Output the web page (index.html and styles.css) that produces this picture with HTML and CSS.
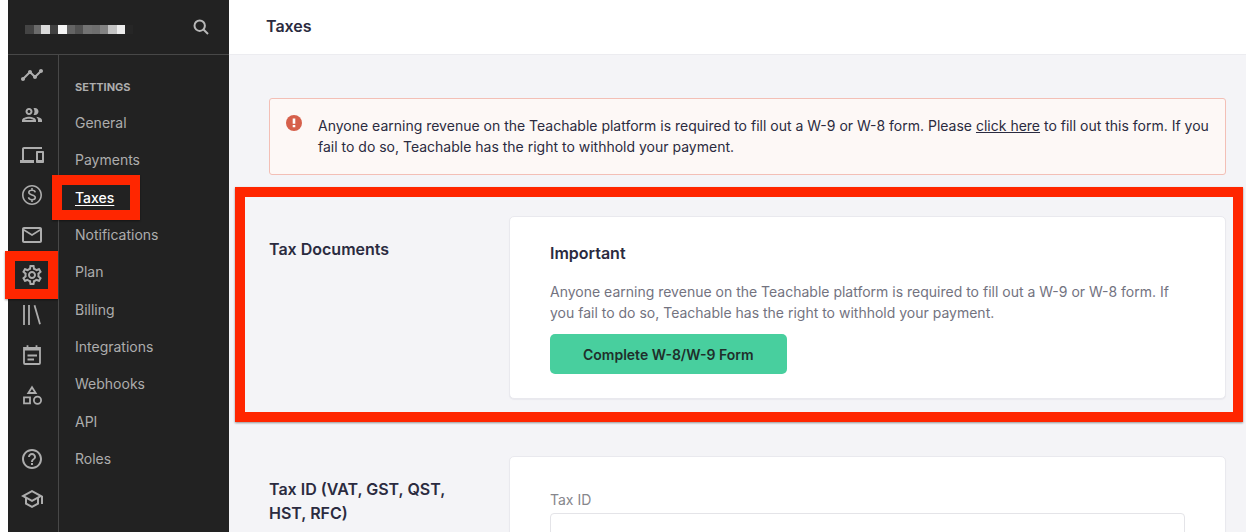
FILE: index.html
```html
<!DOCTYPE html>
<html lang="en">
<head>
<meta charset="utf-8">
<title>Taxes</title>
<link rel="stylesheet" href="styles.css">
</head>
<body>
<div class="app">
  <aside class="sidebar">
    <div class="school">
      <div class="school-name"><svg width="110" height="9" viewBox="0 0 110 9" aria-hidden="true" shape-rendering="crispEdges">
        <path fill="#444" d="M0 0h9v9H0z"/><path fill="#6b6b6b" d="M9 0h7v9H9z"/><path fill="#dadada" d="M16 0h9v9h-9z"/><path fill="#414141" d="M25 0h8v9h-8z"/><path fill="#f5f5f5" d="M33 0h9v9h-9z"/><path fill="#646464" d="M42 0h8v9h-8z"/><path fill="#525252" d="M50 0h8v9h-8z"/><path fill="#737373" d="M58 0h9v9h-9z"/><path fill="#6f6f6f" d="M67 0h8v9h-8z"/><path fill="#838383" d="M75 0h8v9h-8z"/><path fill="#c3c3c3" d="M83 0h9v9h-9z"/><path fill="#ececec" d="M92 0h8v9h-8z"/><path fill="#262626" d="M100 0h8v9h-8z"/></svg></div>
      <button class="search" aria-label="Search"><svg width="16" height="16" viewBox="0 0 16 16" fill="none" stroke="currentColor" stroke-width="2"><circle cx="6.700" cy="6.700" r="5.200"/><path d="M10.500 10.500l4.500 4.500"/></svg></button>
    </div>
    <div class="navs">
      <nav class="rail" aria-label="Main">
        <a href="#" aria-label="Dashboard"><svg viewBox="0 0 24 24"><path d="M23 8c0 1.100-.9 2-2 2-.18 0-.35-.02-.51-.07l-3.560 3.550c.05.16.07.34.07.52 0 1.100-.9 2-2 2s-2-.9-2-2c0-.18.02-.36.07-.52l-2.550-2.550c-.16.05-.34.07-.52.07s-.36-.02-.52-.07l-4.550 4.560c.05.16.07.33.07.51 0 1.100-.9 2-2 2s-2-.9-2-2 .9-2 2-2c.18 0 .35.02.51.07l4.560-4.550C8.020 9.360 8 9.180 8 9c0-1.100.9-2 2-2s2 .9 2 2c0 .18-.02.36-.07.52l2.550 2.550c.16-.05.34-.07.52-.07s.36.02.52.07l3.550-3.560C19.020 8.350 19 8.180 19 8c0-1.100.9-2 2-2s2 .9 2 2z"/></svg></a>
        <a href="#" aria-label="Users"><svg viewBox="0 0 24 24"><path d="M9 13.750c-2.340 0-7 1.170-7 3.500V19h14v-1.750c0-2.330-4.660-3.500-7-3.500zM4.340 17c.84-.58 2.870-1.250 4.660-1.250s3.820.67 4.660 1.250H4.340zM9 12c1.930 0 3.500-1.570 3.500-3.500S10.930 5 9 5 5.500 6.570 5.500 8.500 7.070 12 9 12zm0-5c.83 0 1.500.67 1.500 1.500S9.830 10 9 10s-1.500-.67-1.500-1.500S8.170 7 9 7zm7.040 6.810c1.160.84 1.960 1.960 1.960 3.440V19h4v-1.750c0-2.020-3.500-3.170-5.960-3.440zM15 12c1.930 0 3.500-1.570 3.500-3.500S16.930 5 15 5c-.54 0-1.040.13-1.500.35.63.89 1 1.980 1 3.150s-.37 2.260-1 3.150c.46.22.96.35 1.500.35z"/></svg></a>
        <a href="#" aria-label="Site"><svg viewBox="0 0 24 24"><path d="M4 6h18V4H4c-1.100 0-2 .9-2 2v11H0v3h14v-3H4V6zm19 2h-6c-.55 0-1 .45-1 1v10c0 .55.45 1 1 1h6c.55 0 1-.45 1-1V9c0-.55-.45-1-1-1zm-1 9h-4v-7h4v7z"/></svg></a>
        <a href="#" aria-label="Sales"><svg viewBox="0 0 24 24"><path d="M12 2C6.480 2 2 6.480 2 12s4.480 10 10 10 10-4.480 10-10S17.520 2 12 2zm0 18.400c-4.630 0-8.400-3.770-8.400-8.400S7.370 3.600 12 3.600s8.400 3.770 8.400 8.400-3.770 8.400-8.400 8.400z"/><path fill="none" stroke="currentColor" stroke-width="1.600" d="M15.200 9.300C15 8 13.800 7.300 12 7.300c-2 0-3.200.8-3.200 2.200 0 3.100 6.500 1.700 6.500 5 0 1.400-1.300 2.200-3.300 2.200s-3.300-.9-3.400-2.400M12 5v2.300M12 16.700V19"/></svg></a>
        <a href="#" aria-label="Emails"><svg viewBox="0 0 24 24"><path d="M22 6c0-1.100-.9-2-2-2H4c-1.100 0-2 .9-2 2v12c0 1.100.9 2 2 2h16c1.100 0 2-.9 2-2V6zm-2 0l-8 5-8-5h16zm0 12H4V8l8 5 8-5v10z"/></svg></a>
        <a class="marked" href="#" aria-label="Settings"><svg viewBox="0 0 24 24"><path d="M19.430 12.980c.04-.32.07-.64.07-.98 0-.34-.03-.66-.07-.98l2.110-1.650c.19-.15.24-.42.12-.64l-2-3.460c-.09-.16-.26-.25-.44-.25-.06 0-.12.01-.17.03l-2.490 1c-.52-.4-1.080-.73-1.690-.98l-.38-2.650C14.460 2.180 14.250 2 14 2h-4c-.25 0-.46.18-.49.42l-.38 2.650c-.61.25-1.170.59-1.690.98l-2.490-1c-.06-.02-.12-.03-.18-.03-.17 0-.34.09-.43.25l-2 3.460c-.13.22-.07.49.12.64l2.110 1.650c-.04.32-.07.65-.07.98 0 .33.03.66.07.98l-2.110 1.650c-.19.15-.24.42-.12.64l2 3.460c.09.16.26.25.44.25.06 0 .12-.01.17-.03l2.490-1c.52.4 1.080.73 1.690.98l.38 2.650c.03.24.24.42.49.42h4c.25 0 .46-.18.49-.42l.38-2.650c.61-.25 1.170-.59 1.690-.98l2.490 1c.06.02.12.03.18.03.17 0 .34-.09.43-.25l2-3.460c.12-.22.07-.49-.12-.64l-2.110-1.650zm-1.980-1.710c.04.31.05.52.05.73 0 .21-.02.43-.05.73l-.14 1.130.89.7 1.080.84-.7 1.210-1.270-.51-1.040-.42-.9.68c-.43.32-.84.56-1.250.73l-1.060.43-.16 1.130-.2 1.350h-1.400l-.19-1.350-.16-1.130-1.060-.43c-.43-.18-.83-.41-1.230-.71l-.91-.7-1.060.43-1.270.51-.7-1.210 1.080-.84.89-.7-.14-1.130c-.03-.31-.05-.54-.05-.74s.02-.43.05-.73l.14-1.130-.89-.7-1.080-.84.7-1.210 1.270.51 1.040.42.9-.68c.43-.32.84-.56 1.250-.73l1.060-.43.16-1.130.2-1.350h1.390l.19 1.350.16 1.130 1.060.43c.43.18.83.41 1.230.71l.91.7 1.060-.43 1.270-.51.7 1.210-1.070.85-.89.7.14 1.130zM12 8c-2.210 0-4 1.790-4 4s1.790 4 4 4 4-1.790 4-4-1.790-4-4-4zm0 6c-1.100 0-2-.9-2-2s.9-2 2-2 2 .9 2 2-.9 2-2 2z"/></svg></a>
        <a href="#" aria-label="Library"><svg viewBox="0 0 24 24" class="line"><path d="M4 2v20M9 2v20M14.500 2.200l5.500 19"/></svg></a>
        <a href="#" aria-label="Calendar"><svg viewBox="0 0 24 24" class="line"><path d="M4 5h16v15a1 1 0 0 1-1 1H5a1 1 0 0 1-1-1zM4 6.500h16M7.500 2.200v3M16.500 2.200v3M7.500 12.500h9.500M7.500 16.500h6.500"/></svg></a>
        <a href="#" aria-label="Apps"><svg viewBox="0 0 24 24" class="line"><path d="M12 4.200L8.300 10h7.400zM4 14.300h6v6H4z"/><circle cx="17.500" cy="17.300" r="3.600"/></svg></a>
        <a class="help" href="#" aria-label="Help"><svg viewBox="0 0 24 24"><path d="M11 18h2v-2h-2v2zm1-16C6.480 2 2 6.480 2 12s4.480 10 10 10 10-4.480 10-10S17.520 2 12 2zm0 18c-4.410 0-8-3.590-8-8s3.590-8 8-8 8 3.590 8 8-3.590 8-8 8zm0-14c-2.210 0-4 1.790-4 4h2c0-1.100.9-2 2-2s2 .9 2 2c0 2-3 1.750-3 5h2c0-2.250 3-2.500 3-5 0-2.210-1.790-4-4-4z"/></svg></a>
        <a href="#" aria-label="Academy"><svg viewBox="0 0 24 24"><path d="M12 3L1 9l4 2.180v6L12 21l7-3.820v-6l2-1.090V17h2V9L12 3zm6.820 6L12 12.720 5.180 9 12 5.280 18.820 9zM17 15.990l-5 2.730-5-2.730v-3.720L12 15l5-2.730v3.720z"/></svg></a>
      </nav>
      <nav class="menu" aria-labelledby="menu-title">
        <h2 id="menu-title">SETTINGS</h2>
        <ul>
          <li><a href="#">General</a></li>
          <li><a href="#">Payments</a></li>
          <li class="marked"><a class="current" href="#" aria-current="page">Taxes</a></li>
          <li><a href="#">Notifications</a></li>
          <li><a href="#">Plan</a></li>
          <li><a href="#">Billing</a></li>
          <li><a href="#">Integrations</a></li>
          <li><a href="#">Webhooks</a></li>
          <li><a href="#">API</a></li>
          <li><a href="#">Roles</a></li>
        </ul>
      </nav>
    </div>
  </aside>
  <div class="page">
    <header class="topbar"><h1>Taxes</h1></header>
    <main class="content">
      <div class="alert" role="alert">
        <svg width="16" height="16" viewBox="0 0 16 16" aria-hidden="true"><circle cx="8" cy="8" r="8" fill="#d6604b"/><path fill="#fff" d="M6.700 3.500h2.600v5.200H6.700zM6.700 10h2.600v2.300H6.700z"/></svg>
        <p>Anyone earning revenue on the Teachable platform is required to fill out a W-9 or W-8 form. Please <a href="#">click here</a> to fill out this form. If you fail to do so, Teachable has the right to withhold your payment.</p>
      </div>
      <section class="row marked">
        <h2 class="row-title">Tax Documents</h2>
        <div class="card">
          <h3>Important</h3>
          <p>Anyone earning revenue on the Teachable platform is required to fill out a W-9 or W-8 form. If you fail to do so, Teachable has the right to withhold your payment.</p>
          <button class="primary">Complete W-8/W-9 Form</button>
        </div>
      </section>
      <section class="row">
        <h2 class="row-title">Tax ID (VAT, GST, QST, HST, RFC)</h2>
        <div class="card card-form">
          <label for="tax-id">Tax ID</label>
          <input id="tax-id" type="text">
        </div>
      </section>
    </main>
  </div>
</div>
</body>
</html>
```
FILE: styles.css
```css
* { box-sizing: border-box; }
body, h1, h2, h3, p, ul { margin: 0; padding: 0; }
body {
  height: 100vh;
  overflow: hidden;
  background: #fff;
  color: #2b2b40;
  font: 14px/21px Inter, "Liberation Sans", sans-serif;
}
a { color: inherit; }
button, input { font: inherit; }
.app { display: flex; height: 100%; padding-left: 8px; }

.sidebar {
  display: flex;
  flex-direction: column;
  flex: 0 0 221px;
  background: #222;
  color: #adadad;
}
.school {
  display: flex;
  align-items: center;
  justify-content: space-between;
  height: 55px;
  padding: 0 20px 0 17px;
  border-bottom: 1px solid #484848;
}
.school-name { display: flex; padding-top: 4px; }
.search { display: flex; padding: 0; border: 0; background: none; color: #b8b8b8; }
.navs { display: flex; flex: 1; min-height: 0; }
.rail { flex: 0 0 51px; border-right: 1px solid #484848; }
.rail a {
  position: relative;
  display: flex;
  align-items: center;
  justify-content: center;
  height: 40px;
  padding-right: 2px;
}
.rail .help { margin-top: 24px; }
.rail svg { width: 24px; height: 24px; fill: currentColor; }
.rail .line { fill: none; stroke: currentColor; stroke-width: 1.800; }
.menu { flex: 1; padding: 22px 16px; }
.menu h2 { font-size: 11px; font-weight: 700; line-height: 20px; }
.menu ul { display: grid; grid-auto-rows: 1fr; height: 373px; margin-top: 7px; list-style: none; }
.menu li { position: relative; display: flex; align-items: center; }
.menu a { text-decoration: none; }
.menu .current { color: #fff; font-weight: 500; text-decoration: underline; text-underline-offset: 2px; }

.marked { position: relative; }
.marked::after {
  content: "";
  position: absolute;
  z-index: 1;
  border: 10px solid #ff2600;
  box-shadow: 0 1px 2px rgba(0, 0, 0, .4);
  pointer-events: none;
}
.rail .marked::after { inset: -4px 0 -4px -3px; }
.menu .marked::after { inset: -4px 73px -4px -23px; }
.row.marked::after { inset: -29px -17px -23px -34px; }

.page { flex: 1; min-width: 0; background: #f4f4f7; }
.topbar { height: 55px; padding: 14px 37px; background: #fff; border-bottom: 1px solid #ececf0; }
h1, h3, .row-title { font-size: 16px; font-weight: 600; line-height: 24px; }
.content { padding: 43px 20px 0 40px; }
.alert {
  display: flex;
  gap: 16px;
  padding: 16px 16px 17px;
  border: 1px solid #f3bfb6;
  border-radius: 3px;
  background: #fdf8f6;
}
.alert svg { flex: none; }
.row { display: grid; grid-template-columns: 240px 1fr; margin-top: 57px; }
.alert + .row { margin-top: 41px; }
.row-title { padding: 21px 40px 0 0; }
.card {
  padding: 24px 40px;
  border: 1px solid #e9e9ee;
  border-radius: 5px;
  background: #fff;
  box-shadow: 0 1px 1px #e9e9ee;
}
.card p { margin: 16px 0 11px; color: #73737f; }
.primary {
  height: 40px;
  padding: 0 33px;
  border: 0;
  border-radius: 5px;
  background: #48cf9e;
  color: #1f2f2b;
  font-weight: 600;
}
.card-form { padding: 32px 40px; }
.card-form label { display: block; margin-bottom: 3px; color: #86868c; }
.card-form input { width: 100%; height: 40px; padding: 0 12px; border: 1px solid #e4e4e8; border-radius: 4px; background: #fff; }
```
